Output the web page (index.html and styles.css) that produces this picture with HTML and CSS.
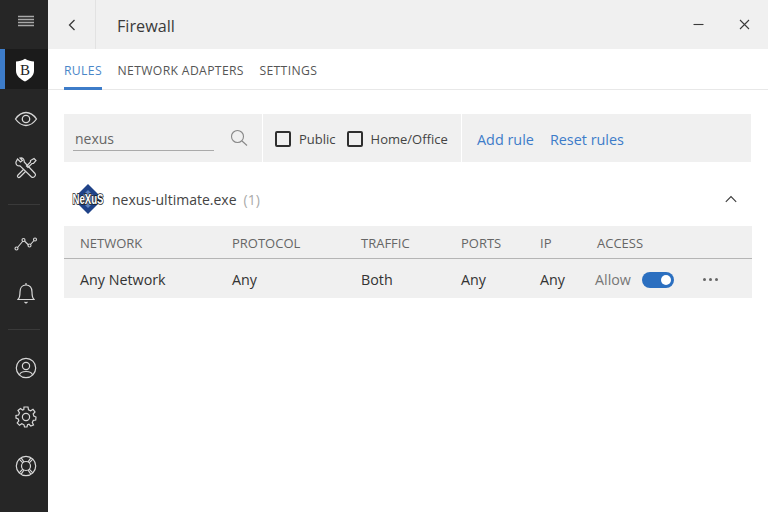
FILE: index.html
```html
<!DOCTYPE html>
<html lang="en">
<head>
<meta charset="utf-8">
<title>Firewall</title>
<link rel="stylesheet" href="styles.css">
</head>
<body>
<div class="app">
  <nav class="sidebar">
    <div class="nav-item menu">
      <svg width="18" height="12" viewBox="0 0 18 12" class="ico muted"><path d="M1 1.500h16M1 4.500h16M1 7.500h16M1 10.500h16" stroke-width="1.300"/></svg>
    </div>
    <div class="nav-item active">
      <svg width="20" height="24" viewBox="0 0 20 24"><path d="M1 3.500 C4 3.500 7 2.500 10 .8 C13 2.500 16 3.500 19 3.500 V13 C19 18 14 21.500 10 23.500 C6 21.500 1 18 1 13Z" fill="#fff"/><text x="10" y="16.500" class="shield-b">B</text></svg>
    </div>
    <div class="nav-item">
      <svg width="24" height="16" viewBox="0 0 24 16" class="ico"><path d="M1.500 8 C5 3 8.500 1.500 12 1.500 S19 3 22.500 8 C19 13 15.500 14.500 12 14.500 S5 13 1.500 8Z" stroke-width="1.300"/><circle cx="12" cy="8" r="3.700" stroke-width="1.300"/></svg>
    </div>
    <div class="nav-item">
      <svg width="22" height="22" viewBox="0 0 22 22" class="ico" stroke-width="1.200"><path d="M2.500 2 L5.500 5 L7.500 3.500 L5 1 C7.500 .2 9.500 2 9.200 5 L20 16.500 C21.500 18.500 18.500 21.500 16.500 20 L5 8.800 C2.500 9.500 .5 7.500 1 5Z"/><path d="M19 1.500 L21 3.500 L18.500 6.500 L17 6.500 L13 10.500 L11.500 9 L15.500 5 L15.500 3.500Z"/><path d="M8.500 12.500 L3 18 C1.500 19.500 3.500 21.500 5 20 L10.500 14.500"/></svg>
    </div>
    <div class="sep first"></div>
    <div class="nav-item">
      <svg width="24" height="14" viewBox="0 0 24 14" class="ico" stroke-width="1.100"><path d="M3.500 10.500 L9 4 M10.500 4 L14.500 8 M16.500 7.500 L20 3.500"/><circle cx="2.500" cy="11.500" r="1.500"/><circle cx="9.500" cy="3" r="1.500"/><circle cx="15.500" cy="8.500" r="1.500"/><circle cx="21" cy="2.500" r="1.500"/></svg>
    </div>
    <div class="nav-item">
      <svg width="18" height="22" viewBox="0 0 18 22" class="ico" stroke-width="1.200"><path d="M1 17.500 H17 C15 15.500 15 13 15 10 C15 6 13 3 9 3 S3 6 3 10 C3 13 3 15.500 1 17.500Z"/><path d="M9 1 V3 M7.500 20 L9 21 L10.500 20"/></svg>
    </div>
    <div class="sep"></div>
    <div class="nav-item">
      <svg width="22" height="22" viewBox="0 0 22 22" class="ico" stroke-width="1.200"><circle cx="11" cy="11" r="9.700"/><circle cx="11" cy="9" r="3.600"/><path d="M4.500 18 C5 15.500 7 14.500 11 14.500 S17 15.500 17.500 18"/></svg>
    </div>
    <div class="nav-item">
      <svg width="22" height="22" viewBox="0 0 22 22" class="ico" stroke-width="1.200"><circle cx="11" cy="11" r="3.600"/><path d="M9 1 H13 L13.500 3.800 L15.700 4.800 L18 3.300 L20 6 L18.200 8 L18.800 10 L21 11 L20.700 14 L18.300 14.300 L17.300 16.500 L18.500 19 L15.800 20 L14 18.300 L12.500 18.800 L12 21 H9.500 L9 18.800 L6.800 17.800 L4.500 19.300 L2.200 17 L3.800 14.800 L3.200 13 L1 12 V9.500 L3.500 9 L4.500 6.800 L3 4.500 L5.500 2.500 L7.500 4 L8.800 3.500Z"/></svg>
    </div>
    <div class="nav-item">
      <svg width="22" height="22" viewBox="0 0 22 22" class="ico" stroke-width="1.200"><circle cx="11" cy="11" r="9.700"/><circle cx="11" cy="11" r="4.500"/><path d="M4.200 4.200 L7.800 7.800 M17.800 4.200 L14.200 7.800 M4.200 17.800 L7.800 14.200 M17.800 17.800 L14.200 14.200 M6.200 2.900 L9 7 M15.800 2.900 L13 7 M6.200 19.100 L9 15 M15.800 19.100 L13 15"/></svg>
    </div>
  </nav>
  <main class="main">
    <header class="titlebar">
      <div class="back">
        <svg width="8" height="12" viewBox="0 0 8 12" class="ico dark" stroke-width="1.300"><path d="M6.500 1 L1.500 6 L6.500 11"/></svg>
      </div>
      <h1 class="title">Firewall</h1>
      <div class="win-btns">
        <svg width="11" height="11" viewBox="0 0 11 11" class="ico dark" stroke-width="1.100"><path d="M.5 5.500 H10.500"/></svg>
        <svg width="11" height="11" viewBox="0 0 11 11" class="ico dark" stroke-width="1.100"><path d="M1 1 L10 10 M10 1 L1 10"/></svg>
      </div>
    </header>
    <div class="tabs">
      <span class="tab current">RULES</span>
      <span class="tab">NETWORK ADAPTERS</span>
      <span class="tab">SETTINGS</span>
    </div>
    <section class="toolbar">
      <div class="tool search">
        <div class="search-field">nexus</div>
        <svg width="18" height="18" viewBox="0 0 18 18" class="ico grey" stroke-width="1.100"><circle cx="7.500" cy="7.500" r="6"/><path d="M12 12 L17 16.500"/></svg>
      </div>
      <div class="tool filters">
        <label class="check"><span class="box"></span>Public</label>
        <label class="check"><span class="box"></span>Home/Office</label>
      </div>
      <div class="tool links">
        <a class="link">Add rule</a>
        <a class="link">Reset rules</a>
      </div>
    </section>
    <div class="app-row">
      <svg width="34" height="32" viewBox="0 0 34 32" class="logo">
        <path d="M17 1 L32 16 L17 31 L2 16Z" fill="#1f4288"/>
        <path d="M17 7 L26 16 L17 25 L8 16Z" fill="#5f83bd"/>
        <text transform="translate(17 20.500) scale(.92 1.400)" class="logo-text">NeXuS</text>
      </svg>
      <span class="app-name">nexus-ultimate.exe</span>
      <span class="app-count">(1)</span>
      <svg width="12" height="8" viewBox="0 0 12 8" class="ico dark" stroke-width="1.100"><path d="M.8 6.800 L6 1.500 L11.200 6.800"/></svg>
    </div>
    <div class="table">
      <div class="row head">
        <span>NETWORK</span><span>PROTOCOL</span><span>TRAFFIC</span><span>PORTS</span><span>IP</span><span>ACCESS</span>
      </div>
      <div class="row body">
        <span>Any Network</span><span>Any</span><span>Both</span><span>Any</span><span>Any</span>
        <span class="access">
          <span class="allow">Allow</span>
          <span class="toggle"><span class="knob"></span></span>
          <span class="dots"><i></i><i></i><i></i></span>
        </span>
      </div>
    </div>
  </main>
</div>
</body>
</html>
```
FILE: styles.css
```css
* { box-sizing: border-box; }
html, body { margin: 0; height: 100%; }
body {
  font-family: "Open Sans", "Noto Sans", "Liberation Sans", sans-serif;
  color: #333;
  background: #fff;
  overflow: hidden;
}
.app { display: flex; width: 768px; height: 512px; }

.ico { fill: none; stroke: #d8d8d8; }
.ico.muted { stroke: #a8a8a8; }
.ico.dark { stroke: #3a3a3a; }
.ico.grey { stroke: #888; }

.sidebar {
  width: 48px;
  flex: none;
  background: #262626;
  display: flex;
  flex-direction: column;
}
.nav-item {
  height: 49px;
  display: flex;
  align-items: center;
  justify-content: center;
  padding-left: 3px;
  padding-top: 1px;
  flex: none;
}
.nav-item.menu { height: 40px; margin-bottom: 9px; }
.nav-item.active {
  height: 40px;
  background: #1b1b1b;
  border-left: 5px solid #3d7cc9;
  padding-left: 0;
  padding-right: 3px;
  margin-bottom: 5px;
}
.shield-b {
  font-family: "Liberation Serif", serif;
  font-size: 15px;
  font-weight: 400;
  text-anchor: middle;
  fill: #222;
}
.sep { height: 1px; background: #3a3a3a; margin: 12px 0 13px 8px; width: 32px; flex: none; }
.sep.first { margin-bottom: 14px; }

.main { flex: 1; display: flex; flex-direction: column; min-width: 0; }

.titlebar {
  height: 49px;
  background: #f0f0f0;
  display: flex;
  align-items: center;
  flex: none;
}
.back {
  width: 48px;
  height: 49px;
  border-right: 1px solid #e2e2e2;
  display: flex;
  align-items: center;
  justify-content: center;
}
.title { margin: 2px 0 0 21px; font-size: 16.2px; font-weight: 400; color: #3a3a3a; flex: 1; }
.win-btns { display: flex; gap: 35px; padding-right: 18px; align-items: center; }

.tabs {
  height: 41px;
  flex: none;
  display: flex;
  gap: 15.500px;
  padding-left: 16px;
  border-bottom: 1px solid #e8e8e8;
}
.tab {
  font-size: 12.2px;
  letter-spacing: .35px;
  line-height: 43px;
  height: 41px;
  color: #555;
}
.tab.current { color: #4a86c8; border-bottom: 3px solid #3d7cc9; }

.toolbar {
  margin: 24px 17px 0 16px;
  height: 48px;
  display: flex;
  gap: 1px;
  flex: none;
}
.tool { background: #f0f0f0; display: flex; align-items: center; height: 48px; }
.search { width: 198px; padding: 0 14px 0 9px; justify-content: space-between; }
.search-field {
  width: 141px;
  height: 25px;
  border-bottom: 1px solid #aaa;
  font-size: 14px;
  line-height: 26px;
  padding-left: 2px;
  color: #666;
}
.filters { width: 198px; padding-left: 12px; gap: 11px; padding-top: 1px; }
.check { display: flex; align-items: center; font-size: 13px; color: #444; white-space: nowrap; }
.box {
  width: 16px;
  height: 16px;
  border: 2px solid #2f2f2f;
  border-radius: 2px;
  margin-right: 8px;
  flex: none;
}
.links { flex: 1; padding-left: 15px; gap: 16px; padding-top: 2px; }
.link { font-size: 14.4px; color: #3d7cc9; }

.app-row {
  height: 54px;
  margin-top: 10px;
  padding: 0 31px 0 23px;
  display: flex;
  align-items: center;
  flex: none;
}
.logo { flex: none; margin-right: 7px; }
.logo-text {
  font-family: "Liberation Sans", sans-serif;
  font-size: 10.500px;
  font-weight: 700;
  text-anchor: middle;
  fill: #fff;
  stroke: #1a1a1a;
  stroke-width: 1.200px;
  paint-order: stroke;
}
.app-name { font-size: 14px; color: #444; }
.app-count { font-size: 14px; color: #aaa; margin-left: 7px; flex: 1; }

.table { margin-left: 16px; width: 688px; flex: none; }
.row {
  display: grid;
  grid-template-columns: 152px 129px 100px 79px 57px 1fr;
  padding-left: 16px;
  background: #f0f0f0;
  align-items: center;
}
.row.head {
  height: 33px;
  padding-top: 2px;
  font-size: 13px;
  color: #666;
  border-bottom: 1px solid #b5b5b5;
}
.row.body {
  height: 39px;
  padding-top: 2px;
  font-size: 14.300px;
  color: #333;
}
.access { display: flex; align-items: center; margin-left: -2px; }
.allow { color: #777; }
.toggle {
  width: 32px;
  height: 16px;
  border-radius: 8px;
  background: #2b6fc0;
  margin-left: 11px;
  position: relative;
  flex: none;
}
.knob {
  position: absolute;
  right: 3px;
  top: 3px;
  width: 10px;
  height: 10px;
  border-radius: 50%;
  background: #fff;
}
.dots { display: flex; gap: 2.500px; margin-left: 29px; }
.dots i { width: 3.500px; height: 3.500px; background: #666; border-radius: 50%; }
```
